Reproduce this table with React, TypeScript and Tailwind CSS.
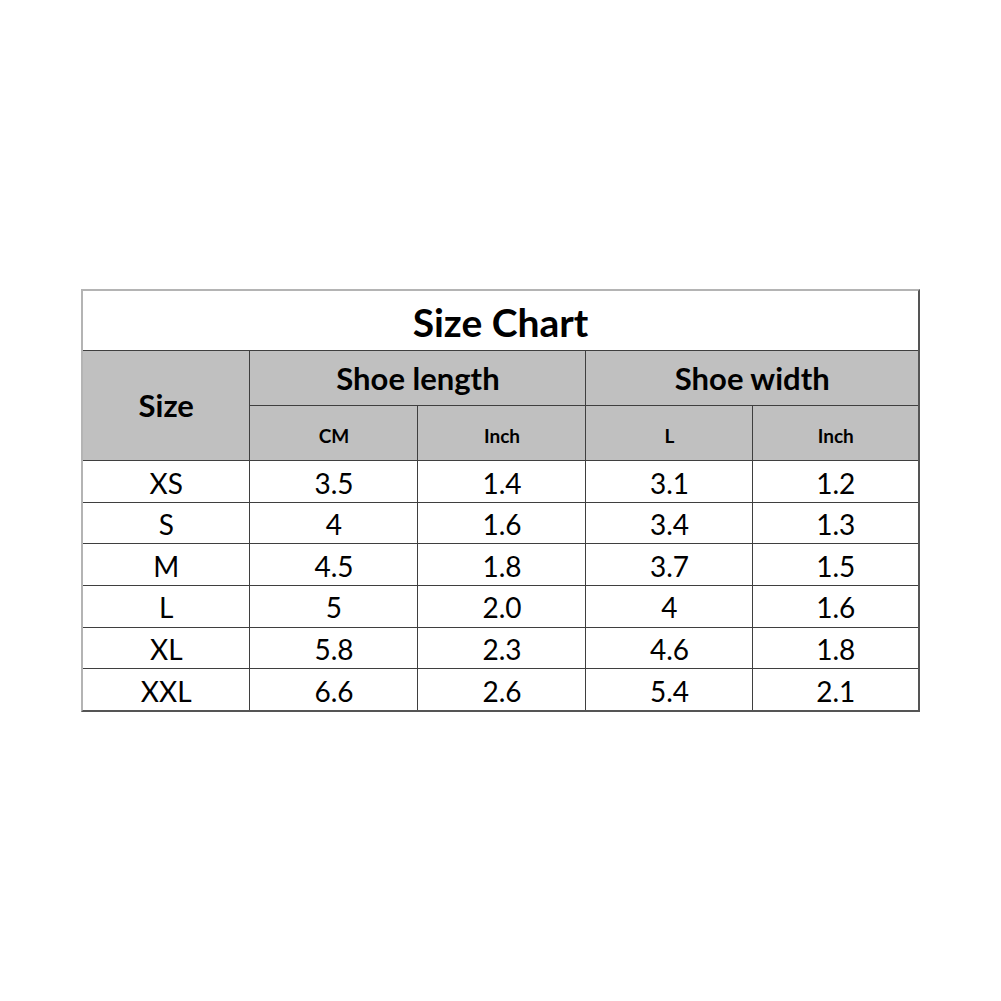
import React from 'react';

type Row = { size: string; cm: string; inch: string; wl: string; winch: string };

const rows: Row[] = [
  { size: 'XS', cm: '3.5', inch: '1.4', wl: '3.1', winch: '1.2' },
  { size: 'S', cm: '4', inch: '1.6', wl: '3.4', winch: '1.3' },
  { size: 'M', cm: '4.5', inch: '1.8', wl: '3.7', winch: '1.5' },
  { size: 'L', cm: '5', inch: '2.0', wl: '4', winch: '1.6' },
  { size: 'XL', cm: '5.8', inch: '2.3', wl: '4.6', winch: '1.8' },
  { size: 'XXL', cm: '6.6', inch: '2.6', wl: '5.4', winch: '2.1' },
];

const cell = 'border border-[#3f3f3f] text-center p-0 leading-none';

export default function App() {
  return (
    <div className="h-screen w-full bg-white flex items-center justify-center font-['Lato',sans-serif] text-black">
      <div className="border-t-2 border-l-2 border-t-[#b4b4b4] border-l-[#b4b4b4] border-r-2 border-b-2 border-r-[#555] border-b-[#555]">
        <table className="border-collapse table-fixed w-[835px]">
          <colgroup>
            <col className="w-[167px]" />
            <col className="w-[168px]" />
            <col className="w-[168px]" />
            <col className="w-[167px]" />
            <col className="w-[165px]" />
          </colgroup>
          <thead>
            <tr className="h-[60px]">
              <th colSpan={5} className="border-b border-[#3f3f3f] text-[39px] leading-none font-bold p-0 pt-1">
                Size Chart
              </th>
            </tr>
            <tr className="h-[55px] bg-[#c0c0c0]">
              <th rowSpan={2} className={`${cell} border-l-0 text-[31px] font-bold`}>Size</th>
              <th colSpan={2} className={`${cell} text-[31px] font-bold`}>Shoe length</th>
              <th colSpan={2} className={`${cell} border-r-0 text-[31px] font-bold`}>Shoe width</th>
            </tr>
            <tr className="h-[55px] bg-[#c0c0c0]">
              <th className={`${cell} text-[19px] font-bold pt-1`}>CM</th>
              <th className={`${cell} text-[19px] font-bold pt-1`}>Inch</th>
              <th className={`${cell} text-[19px] font-bold pt-1`}>L</th>
              <th className={`${cell} border-r-0 text-[19px] font-bold pt-1`}>Inch</th>
            </tr>
          </thead>
          <tbody>
            {rows.map((r, i) => (
              <tr key={r.size} className="h-[41.6px] text-[28px]">
                <td className={`${cell} border-l-0 pt-0.5 ${i === rows.length - 1 ? 'border-b-0' : ''}`}>{r.size}</td>
                <td className={`${cell} pt-0.5 ${i === rows.length - 1 ? 'border-b-0' : ''}`}>{r.cm}</td>
                <td className={`${cell} pt-0.5 ${i === rows.length - 1 ? 'border-b-0' : ''}`}>{r.inch}</td>
                <td className={`${cell} pt-0.5 ${i === rows.length - 1 ? 'border-b-0' : ''}`}>{r.wl}</td>
                <td className={`${cell} border-r-0 pt-0.5 ${i === rows.length - 1 ? 'border-b-0' : ''}`}>{r.winch}</td>
              </tr>
            ))}
          </tbody>
        </table>
      </div>
    </div>
  );
}
